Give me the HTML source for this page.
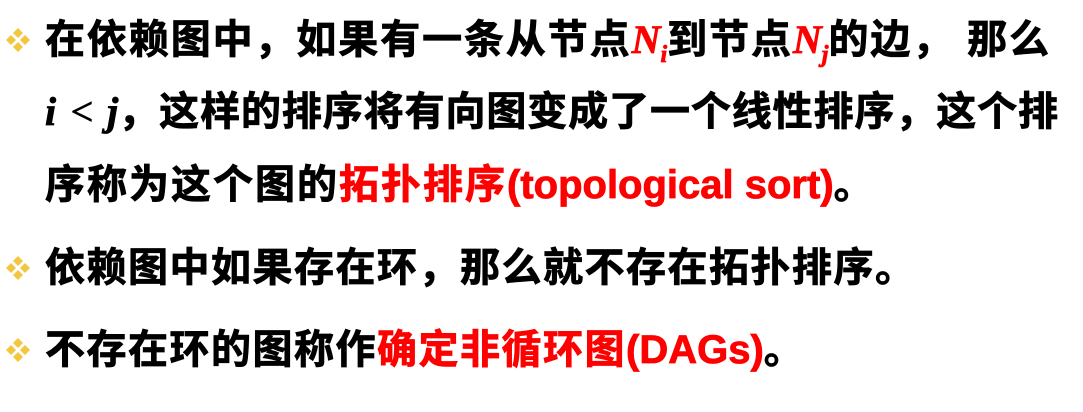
<!DOCTYPE html>
<html><head><meta charset="utf-8"><style>
body{margin:0;width:1083px;height:412px;background:#fff;overflow:hidden;position:relative;font-family:"Liberation Sans","Noto Sans CJK SC",sans-serif;font-weight:bold;}
.l{position:absolute;left:45px;font-size:40px;letter-spacing:1.5px;line-height:48px;white-space:nowrap;color:#000;-webkit-text-stroke:0.8px currentColor;}
.r{color:#f00}
.m{font-family:"Liberation Serif",serif;font-style:italic;letter-spacing:0}
.b{position:absolute;left:4px;width:28px;height:28px}
</style></head><body>
<svg class="b" style="top:26px" viewBox="0 0 28 28"><g fill="#f3c640"><path d="M14 2l5 5-5 5-5-5z"/><path d="M14 16l5 5-5 5-5-5z"/><path d="M7 9l5 5-5 5-5-5z"/><path d="M21 9l5 5-5 5-5-5z"/></g></svg>
<svg class="b" style="top:254px" viewBox="0 0 28 28"><g fill="#f3c640"><path d="M14 2l5 5-5 5-5-5z"/><path d="M14 16l5 5-5 5-5-5z"/><path d="M7 9l5 5-5 5-5-5z"/><path d="M21 9l5 5-5 5-5-5z"/></g></svg>
<svg class="b" style="top:336px" viewBox="0 0 28 28"><g fill="#f3c640"><path d="M14 2l5 5-5 5-5-5z"/><path d="M14 16l5 5-5 5-5-5z"/><path d="M7 9l5 5-5 5-5-5z"/><path d="M21 9l5 5-5 5-5-5z"/></g></svg>
<div class="l" style="top:16px;letter-spacing:1.9px">在依赖图中，如果有一条从节点<span class="r m">N<sub style="font-size:24px">i</sub></span>到节点<span class="r m">N<sub style="font-size:24px">j</sub></span>的边， 那么</div>
<div class="l" style="top:88px;letter-spacing:0.9px"><span class="m" style="font-weight:bold">i</span> <span class="m" style="font-weight:normal">&lt;</span> <span class="m" style="font-weight:bold">j</span>，这样的排序将有向图变成了一个线性排序，这个排</div>
<div class="l" style="top:161px;letter-spacing:2px">序称为这个图的<span class="r">拓扑排序<span style="letter-spacing:0">(topological sort)</span></span>。</div>
<div class="l" style="top:244px">依赖图中如果存在环，那么就不存在拓扑排序。</div>
<div class="l" style="top:326px">不存在环的图称作<span class="r">确定非循环图<span style="letter-spacing:0">(DAGs)</span></span>。</div>
</body></html>
